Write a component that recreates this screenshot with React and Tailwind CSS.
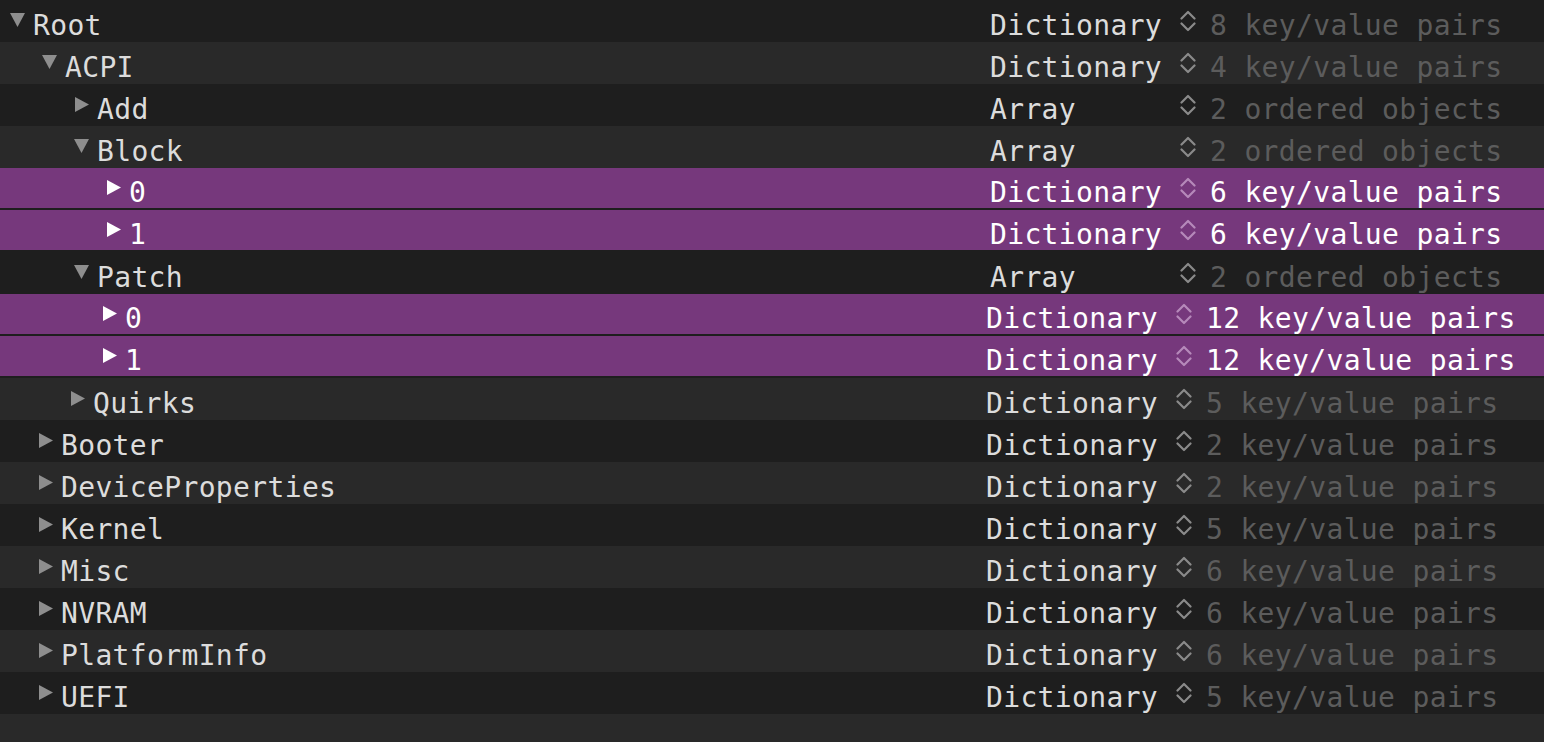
import React from "react";

const rows = [
  { k: "Root", lvl: 0, exp: true, t: "Dictionary", v: "8 key/value pairs", s: true },
  { k: "ACPI", lvl: 1, exp: true, t: "Dictionary", v: "4 key/value pairs", s: true },
  { k: "Add", lvl: 2, exp: false, t: "Array", v: "2 ordered objects", s: true },
  { k: "Block", lvl: 2, exp: true, t: "Array", v: "2 ordered objects", s: true },
  { k: "0", lvl: 3, exp: false, sel: true, t: "Dictionary", v: "6 key/value pairs", s: true },
  { k: "1", lvl: 3, exp: false, sel: true, t: "Dictionary", v: "6 key/value pairs", s: true },
  { k: "Patch", lvl: 2, exp: true, t: "Array", v: "2 ordered objects", s: true },
  { k: "0", lvl: 3, exp: false, sel: true, t: "Dictionary", v: "12 key/value pairs" },
  { k: "1", lvl: 3, exp: false, sel: true, t: "Dictionary", v: "12 key/value pairs" },
  { k: "Quirks", lvl: 2, exp: false, t: "Dictionary", v: "5 key/value pairs" },
  { k: "Booter", lvl: 1, exp: false, t: "Dictionary", v: "2 key/value pairs" },
  { k: "DeviceProperties", lvl: 1, exp: false, t: "Dictionary", v: "2 key/value pairs" },
  { k: "Kernel", lvl: 1, exp: false, t: "Dictionary", v: "5 key/value pairs" },
  { k: "Misc", lvl: 1, exp: false, t: "Dictionary", v: "6 key/value pairs" },
  { k: "NVRAM", lvl: 1, exp: false, t: "Dictionary", v: "6 key/value pairs" },
  { k: "PlatformInfo", lvl: 1, exp: false, t: "Dictionary", v: "6 key/value pairs" },
  { k: "UEFI", lvl: 1, exp: false, t: "Dictionary", v: "5 key/value pairs" },
];

const indent = ["w-[6px]", "w-[38px]", "w-[70px]", "w-[102px]"];

function Triangle({ exp, sel }) {
  const fill = sel ? "#ffffff" : "#8e8e8e";
  if (exp) {
    return (
      <svg width="15" height="14" viewBox="0 0 15 14" className="mb-[2px]">
        <polygon points="0,0 15,0 7.5,14" fill={fill} />
      </svg>
    );
  }
  return (
    <svg width="14" height="15" viewBox="0 0 14 15" className="ml-px mb-[2px]">
      <polygon points="0,0 14,7.5 0,15" fill={fill} />
    </svg>
  );
}

function Chevron({ sel }) {
  const c = sel ? "#b689ba" : "#8a8a8a";
  return (
    <svg width="16" height="22" viewBox="0 0 16 22" fill="none">
      <path d="M1.5 8.5 L8 2 L14.5 8.5" stroke={c} strokeWidth="2.2" strokeLinecap="round" strokeLinejoin="round" />
      <path d="M1.5 13.5 L8 20 L14.5 13.5" stroke={c} strokeWidth="2.2" strokeLinecap="round" strokeLinejoin="round" />
    </svg>
  );
}

export default function App() {
  return (
    <div
      className="w-[1544px] h-[742px] overflow-hidden bg-[#292929] text-[28px] tracking-[0.35px] text-[#dcdcdc]"
      style={{ fontFamily: '"DejaVu Sans Mono", "Liberation Mono", monospace' }}
    >
      {rows.map((r, i) => {
        const bg = r.sel
          ? "bg-[#76387c] border-b-2 border-[#1e1e1e] text-white"
          : i % 2 === 0
          ? "bg-[#1e1e1e]"
          : "bg-[#292929]";
        return (
          <div
            key={i}
            className={`flex h-[42px] items-center ${bg} ${r.s ? "pl-[4px]" : ""}`}
          >
            <div className="flex w-[986px] shrink-0 items-center">
              <div className={`${indent[r.lvl]} shrink-0`} />
              <div className="flex w-[23px] shrink-0 items-center">
                <Triangle exp={r.exp} sel={r.sel} />
              </div>
              <span className="pt-[10px] leading-[32px] whitespace-pre">{r.k}</span>
            </div>
            <div className="w-[190px] shrink-0 pt-[10px] leading-[32px] whitespace-pre">{r.t}</div>
            <div className="flex w-[30px] shrink-0 items-center">
              <Chevron sel={r.sel} />
            </div>
            <div
              className={`pt-[10px] leading-[32px] whitespace-pre ${
                r.sel ? "text-white" : "text-[#5c5c5c]"
              }`}
            >
              {r.v}
            </div>
          </div>
        );
      })}
    </div>
  );
}
